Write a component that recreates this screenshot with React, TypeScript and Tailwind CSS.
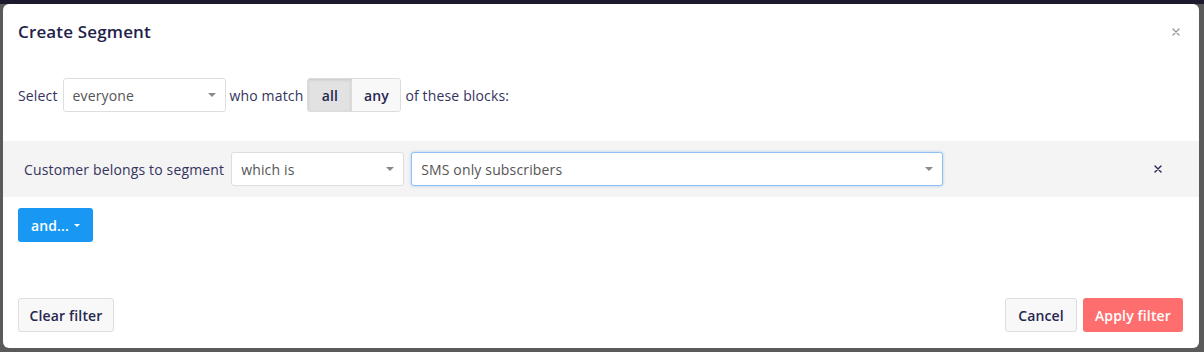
import React from 'react';

const Caret = ({ className = 'text-[#8a8a8a]', w = 8 }: { className?: string; w?: number }) => (
  <svg width={w} height={w / 2} viewBox="0 0 8 4" className={className}>
    <path d="M0 0h8L4 4z" fill="currentColor" />
  </svg>
);

const Cross = ({ className }: { className: string }) => (
  <svg width="8" height="8" viewBox="0 0 8 8" className={className}>
    <path d="M1 1l6 6M7 1L1 7" stroke="currentColor" strokeWidth="1.4" strokeLinecap="round" />
  </svg>
);

const SelectBox = ({ value, width, focused }: { value: string; width: string; focused?: boolean }) => (
  <div
    className={`flex h-[34px] ${width} items-center justify-between rounded-[3px] border bg-white pl-[9px] pr-[9px] text-[14px] text-[#555] ${
      focused ? 'border-[#8fc1f2] shadow-[0_0_3px_rgba(70,150,230,0.45)]' : 'border-[#dedede]'
    }`}
  >
    <span>{value}</span>
    <Caret />
  </div>
);

export default function App() {
  return (
    <div className="h-[352px] w-[1204px] overflow-hidden bg-[#5a5a5a] font-['Open_Sans',sans-serif] tracking-[0.15px]">
      <div className="h-[4px] w-full bg-[#1b1b2d]" />
      <div className="ml-[3px] flex h-[344px] w-[1196px] flex-col rounded-md bg-white text-[#33335e]">
        {/* Header */}
        <div className="flex h-[56px] items-center justify-between pl-[15px] pr-[19px]">
          <h2 className="text-[17px] font-semibold text-[#1f1f4b]">Create Segment</h2>
          <Cross className="text-[#9a9a9a]" />
        </div>

        {/* Match row */}
        <div className="mt-[18px] flex h-[34px] items-center gap-[4px] pl-[15px] text-[14px]">
          <span className="mr-[1px]">Select</span>
          <SelectBox value="everyone" width="w-[163px]" />
          <span>who match</span>
          <div className="flex h-[34px] overflow-hidden rounded-[3px] border border-[#dcdcdc] text-[14px] font-semibold text-[#26264f]">
            <div className="flex w-[43px] items-center justify-center bg-[#e2e2e2] shadow-[inset_0_1px_3px_rgba(0,0,0,0.12)]">all</div>
            <div className="flex w-[49px] items-center justify-center border-l border-[#dcdcdc] bg-[#f8f8f8]">any</div>
          </div>
          <span>of these blocks:</span>
        </div>

        {/* Condition block */}
        <div className="mt-[29px] flex h-[56px] items-center bg-[#f4f4f4] pl-[21px] pr-[37px] text-[14px]">
          <span className="mr-[7px]">Customer belongs to segment</span>
          <SelectBox value="which is" width="w-[173px]" />
          <div className="ml-[7px]">
            <SelectBox value="SMS only subscribers" width="w-[532px]" focused />
          </div>
          <div className="ml-auto">
            <Cross className="text-[#26264f]" />
          </div>
        </div>

        {/* And button */}
        <div className="mt-[11px] pl-[15px]">
          <button className="flex h-[34px] w-[75px] items-center justify-center gap-[5px] rounded-[3px] bg-[#1898f2] text-[14px] font-semibold text-white">
            and...
            <Caret className="text-white" w={6} />
          </button>
        </div>

        {/* Footer */}
        <div className="mt-auto mb-[16px] flex items-center justify-between pl-[15px] pr-[16px] text-[14px] font-semibold">
          <button className="h-[34px] w-[96px] rounded-[3px] border border-[#dedede] bg-[#f8f8f8] text-[#26264f]">Clear filter</button>
          <div className="flex gap-[6px]">
            <button className="h-[34px] w-[72px] rounded-[3px] border border-[#dedede] bg-[#f8f8f8] text-[#26264f]">Cancel</button>
            <button className="h-[34px] w-[100px] rounded-[3px] bg-[#ff6e6e] text-white">Apply filter</button>
          </div>
        </div>
      </div>
    </div>
  );
}
